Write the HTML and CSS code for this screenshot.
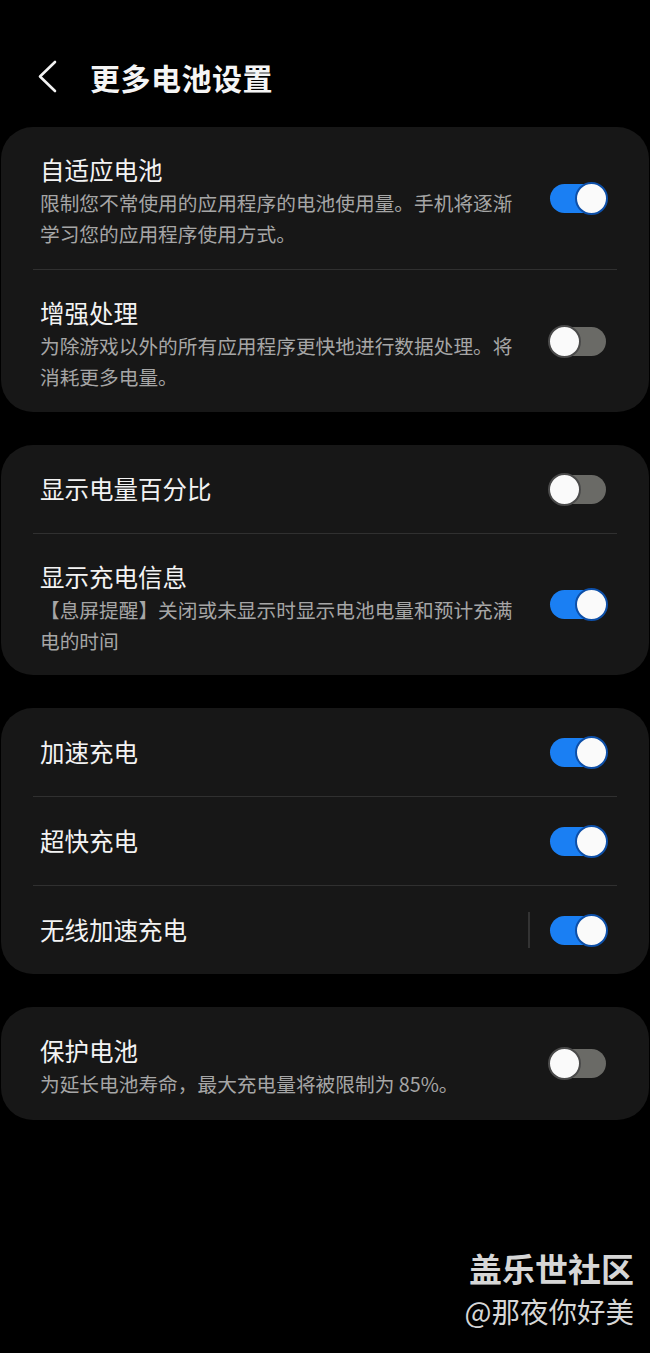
FILE: index.html
```html
<!DOCTYPE html>
<html lang="zh-CN">
<head>
  <meta charset="UTF-8">
  <meta name="viewport" content="width=device-width, initial-scale=1.0">
  <title>更多电池设置</title>
  <link rel="stylesheet" href="styles.css">
</head>
<body>
  <header class="topbar">
    <svg class="back" width="24" height="34" viewBox="0 0 24 34">
      <polyline points="18,2 3,16.5 18,31" fill="none" stroke="#f2f2f2" stroke-width="2.6" stroke-linecap="round" stroke-linejoin="round"/>
    </svg>
    <h1>更多电池设置</h1>
  </header>

  <main>
    <section class="card">
      <div class="row tall">
        <div class="text">
          <div class="title">自适应电池</div>
          <div class="sub">限制您不常使用的应用程序的电池使用量。手机将逐渐学习您的应用程序使用方式。</div>
        </div>
        <span class="switch on"></span>
      </div>
      <div class="divider"></div>
      <div class="row tall">
        <div class="text">
          <div class="title">增强处理</div>
          <div class="sub">为除游戏以外的所有应用程序更快地进行数据处理。将消耗更多电量。</div>
        </div>
        <span class="switch"></span>
      </div>
    </section>

    <section class="card">
      <div class="row">
        <div class="text">
          <div class="title">显示电量百分比</div>
        </div>
        <span class="switch"></span>
      </div>
      <div class="divider"></div>
      <div class="row tall">
        <div class="text">
          <div class="title">显示充电信息</div>
          <div class="sub">【息屏提醒】关闭或未显示时显示电池电量和预计充满电的时间</div>
        </div>
        <span class="switch on"></span>
      </div>
    </section>

    <section class="card">
      <div class="row">
        <div class="text">
          <div class="title">加速充电</div>
        </div>
        <span class="switch on"></span>
      </div>
      <div class="divider"></div>
      <div class="row">
        <div class="text">
          <div class="title">超快充电</div>
        </div>
        <span class="switch on"></span>
      </div>
      <div class="divider"></div>
      <div class="row">
        <div class="text">
          <div class="title">无线加速充电</div>
        </div>
        <span class="vbar"></span>
        <span class="switch on"></span>
      </div>
    </section>

    <section class="card">
      <div class="row mid">
        <div class="text">
          <div class="title">保护电池</div>
          <div class="sub">为延长电池寿命，最大充电量将被限制为 85%。</div>
        </div>
        <span class="switch"></span>
      </div>
    </section>
  </main>

  <div class="watermark">
    <div class="wm-big">盖乐世社区</div>
    <div class="wm-small">@那夜你好美</div>
  </div>
</body>
</html>
```

FILE: styles.css
```css
body {
  margin: 0;
  background: #000;
  color: #f3f3f3;
  font-family: "Noto Sans CJK SC", "Noto Sans", sans-serif;
  width: 650px;
  height: 1353px;
  position: relative;
  overflow: hidden;
}
.topbar {
  height: 127px;
  display: flex;
  align-items: center;
  box-sizing: border-box;
  padding: 27px 0 0 37px;
}
.back {
  margin-right: 29px;
}
.topbar h1 {
  margin: 0;
  font-size: 30px;
  font-weight: 700;
  letter-spacing: 0.5px;
  color: #f5f5f5;
}
main {
  display: flex;
  flex-direction: column;
  gap: 33px;
}
.card {
  background: #171717;
  border-radius: 32px;
  margin: 0 1px;
}
.row {
  height: 88px;
  display: flex;
  align-items: center;
  padding: 0 43px 0 39px;
}
.row.tall {
  height: 141px;
}
.row.mid {
  height: 113px;
}
.card:first-child .row.tall {
  height: 142px;
}
.text {
  width: 480px;
  margin-right: 31px;
}
.tall .text,
.mid .text {
  padding-top: 6px;
}
.title {
  font-size: 24.5px;
  line-height: 34px;
  color: #f3f3f3;
}
.sub {
  font-size: 19.7px;
  line-height: 31px;
  color: #a6a6a6;
}
.divider {
  height: 1px;
  background: #303030;
  margin: 0 32px;
}
.vbar {
  width: 2px;
  height: 36px;
  background: #333;
  margin-left: -22px;
  margin-right: 20px;
}
.switch {
  position: relative;
  width: 56px;
  height: 29px;
  border-radius: 15px;
  background: #6a6a66;
  flex-shrink: 0;
}
.switch::after {
  content: "";
  position: absolute;
  top: -2px;
  left: -2px;
  width: 29px;
  height: 29px;
  border-radius: 50%;
  background: #fafafa;
  border: 2px solid #4a4a4a;
}
.switch.on {
  background: #1a7ff3;
}
.switch.on::after {
  left: auto;
  right: -2px;
  border-color: #0d4fa8;
}
.watermark {
  position: absolute;
  right: 16px;
  top: 1245px;
  text-align: right;
  color: #d6d6d6;
}
.wm-big {
  font-size: 33px;
  font-weight: 700;
  line-height: 46px;
}
.wm-small {
  font-size: 28.5px;
  line-height: 40px;
}
```
